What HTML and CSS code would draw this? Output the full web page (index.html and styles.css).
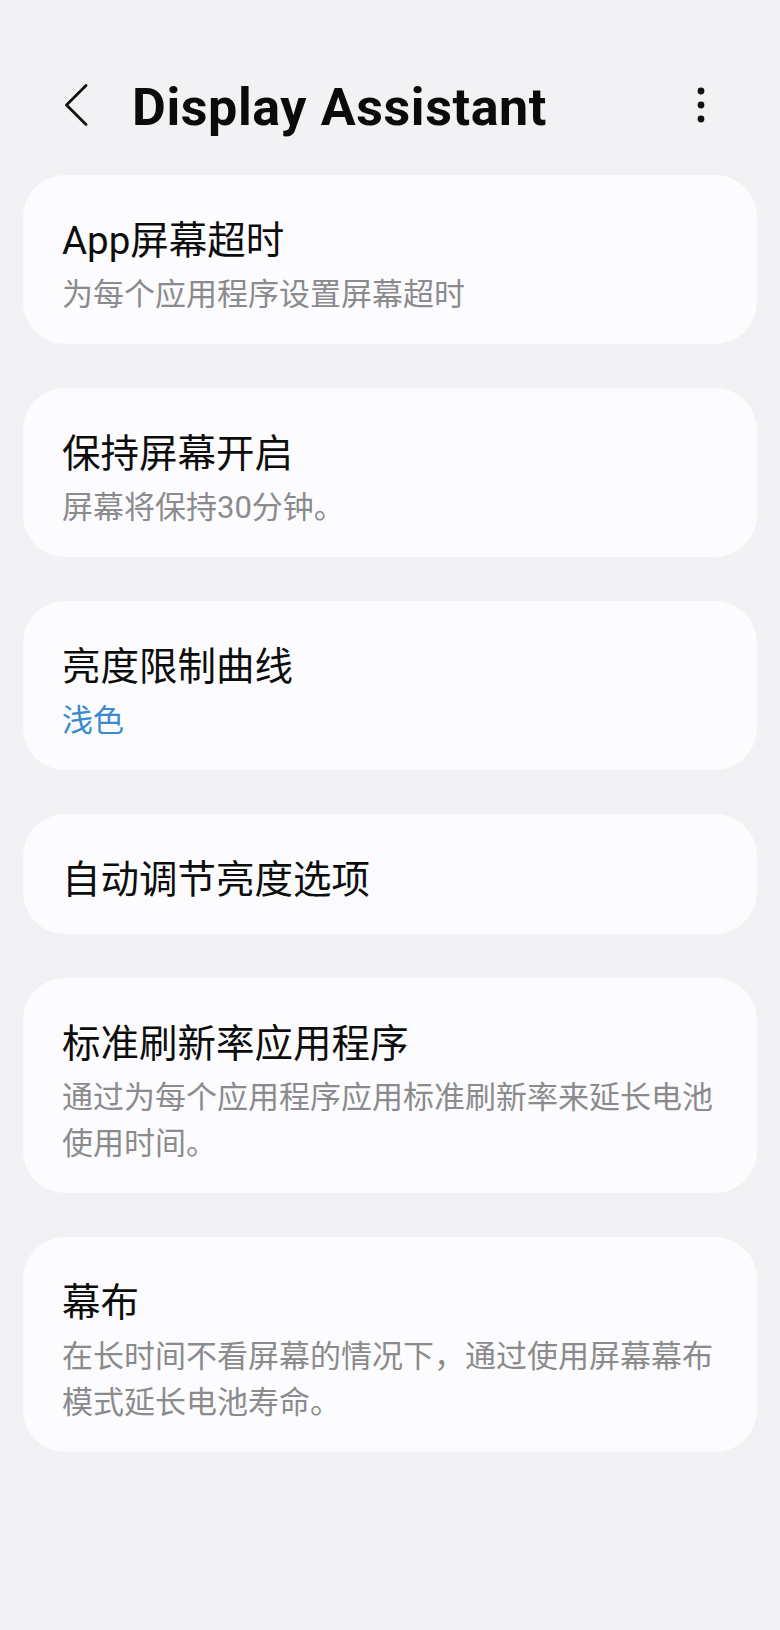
FILE: index.html
```html
<!DOCTYPE html>
<html lang="zh-CN">
<head>
<meta charset="utf-8">
<title>Display Assistant</title>
<link rel="stylesheet" href="styles.css">
</head>
<body>
<div class="screen">
  <header class="topbar">
    <svg class="back" width="24" height="42" viewBox="0 0 24 42" aria-hidden="true">
      <path d="M22 1.5 L2.5 21 L22 40.5" fill="none" stroke="#111" stroke-width="2.8" stroke-linecap="round" stroke-linejoin="round"/>
    </svg>
    <h1 class="title">Display Assistant</h1>
    <svg class="more" width="8" height="36" viewBox="0 0 8 36" aria-hidden="true">
      <circle cx="4" cy="4" r="3.4" fill="#111"/>
      <circle cx="4" cy="18" r="3.4" fill="#111"/>
      <circle cx="4" cy="32" r="3.4" fill="#111"/>
    </svg>
  </header>

  <main class="list">
    <section class="card">
      <div class="card-title">App屏幕超时</div>
      <div class="card-sub">为每个应用程序设置屏幕超时</div>
    </section>
    <section class="card">
      <div class="card-title">保持屏幕开启</div>
      <div class="card-sub">屏幕将保持30分钟。</div>
    </section>
    <section class="card">
      <div class="card-title">亮度限制曲线</div>
      <div class="card-sub accent">浅色</div>
    </section>
    <section class="card">
      <div class="card-title">自动调节亮度选项</div>
    </section>
    <section class="card">
      <div class="card-title">标准刷新率应用程序</div>
      <div class="card-sub">通过为每个应用程序应用标准刷新率来延长电池使用时间。</div>
    </section>
    <section class="card">
      <div class="card-title">幕布</div>
      <div class="card-sub">在长时间不看屏幕的情况下，通过使用屏幕幕布模式延长电池寿命。</div>
    </section>
  </main>
</div>
</body>
</html>
```

FILE: styles.css
```css
html, body {
  margin: 0;
  padding: 0;
  background: #f2f2f4;
}

.screen {
  width: 780px;
  min-height: 1630px;
  background: #f2f2f4;
  font-family: "Roboto", "Noto Sans CJK SC", sans-serif;
  color: #0d0d0d;
}

.topbar {
  display: flex;
  align-items: center;
  height: 66px;
  padding-top: 72px;
  margin-bottom: 37px;
}

.back {
  margin-left: 64px;
  flex: none;
}

.title {
  margin: 0 0 0 44px;
  padding-top: 6px;
  font-family: "Roboto", sans-serif;
  font-weight: 700;
  font-size: 52px;
  line-height: 60px;
  letter-spacing: 0.6px;
  color: #0b0b0b;
}

.more {
  margin-left: auto;
  margin-right: 75px;
  flex: none;
}

.list {
  display: flex;
  flex-direction: column;
  gap: 44px;
  padding: 0 23px;
}

.card {
  background: #fcfcfe;
  border-radius: 42px;
  padding: 37px 39px 26px 39px;
}

.card-title {
  font-size: 38.5px;
  line-height: 57px;
  color: #0d0d0d;
}

.card-sub {
  margin-top: 3px;
  font-size: 31px;
  line-height: 46px;
  color: #8b8b8d;
}

.card-sub.accent {
  color: #3a8ad0;
}
```
